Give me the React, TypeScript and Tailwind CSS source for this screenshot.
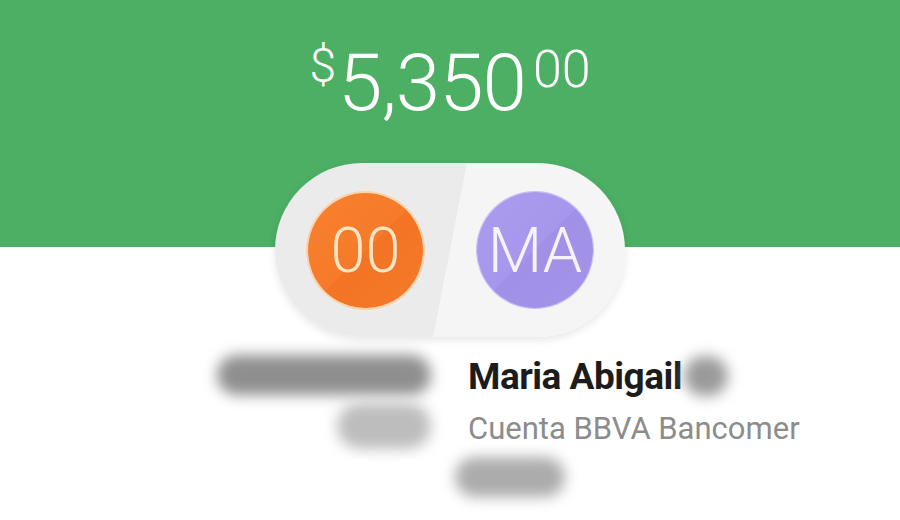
import React from 'react';

const Blob: React.FC<{ className: string }> = ({ className }) => (
  <div className={`rounded-full blur-[7px] ${className}`} />
);

export default function App() {
  return (
    <div className="w-[900px] h-[520px] bg-white overflow-hidden font-['Roboto',sans-serif]">
      {/* amount header */}
      <div className="h-[247px] bg-[#4caf64] flex justify-center pt-[43px]">
        <div className="flex items-start text-white font-light">
          <span className="text-[48px] leading-none -mt-[1px] mr-[2px]">$</span>
          <span className="text-[80px] leading-none tracking-[-1px]">5,350</span>
          <span className="text-[52px] leading-none mt-[1px] ml-[7px]">00</span>
        </div>
      </div>

      {/* sender / receiver pill */}
      <div className="flex justify-center -mt-[84px]">
        <div className="w-[350px] h-[174px] rounded-full bg-[linear-gradient(101deg,#ebebeb_50%,#f5f5f5_50%)] shadow-[0_3px_8px_rgba(0,0,0,0.10)] flex items-center pl-[33px] pr-[32px] gap-[54px]">
          <div className="w-[115px] h-[115px] shrink-0 rounded-full bg-[linear-gradient(135deg,#f7802e_0%,#f57b2a_50%,#f27424_50%,#f47a2a_100%)] ring-2 ring-[#fcd3ac] flex items-center justify-center text-[#fde4c2] text-[63px] font-light leading-none">
            00
          </div>
          <div className="w-[116px] h-[116px] shrink-0 rounded-full bg-[linear-gradient(135deg,#ab9cf0_0%,#a797ec_50%,#a191e6_50%,#a493e8_100%)] ring-1 ring-[#c9bff5] flex items-center justify-center text-[#f6f3ff] text-[63px] font-light leading-none">
            MA
          </div>
        </div>
      </div>

      {/* details */}
      <div className="grid grid-cols-[440px_1fr] gap-x-[28px] mt-[16px]">
        <div className="flex flex-col items-end">
          <Blob className="w-[214px] h-[40px] mr-[9px] mt-[2px] bg-[#8f8f8f]" />
          <Blob className="w-[94px] h-[46px] mr-[9px] mt-[8px] bg-[#bdbdbd]" />
        </div>
        <div className="flex flex-col items-start">
          <div className="flex items-center h-[46px]">
            <span className="text-[37px] font-bold text-[#1c1c1c] leading-none tracking-[-0.5px]">Maria Abigail</span>
            <Blob className="w-[44px] h-[40px] ml-[2px] bg-[#9a9a9a]" />
          </div>
          <div className="h-[50px] flex items-center pt-[8px]">
            <span className="text-[31px] text-[#8c8c8c] leading-none">Cuenta BBVA Bancomer</span>
          </div>
          <Blob className="w-[110px] h-[40px] -ml-[13px] mt-[8px] bg-[#acacac]" />
        </div>
      </div>
    </div>
  );
}
